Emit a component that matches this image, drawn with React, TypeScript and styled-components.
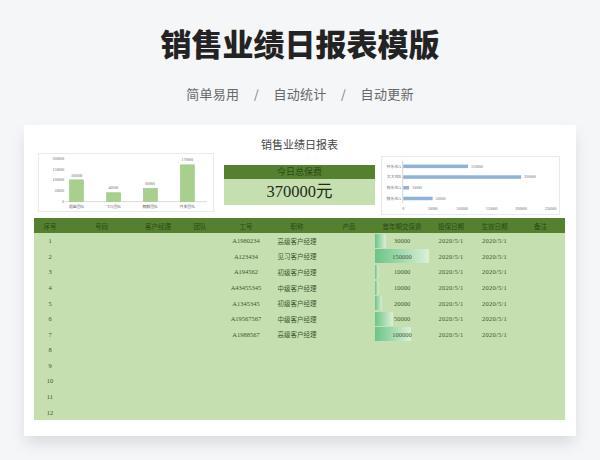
import styled, { createGlobalStyle } from "styled-components"

const GlobalStyle = createGlobalStyle`
  html, body {
    margin: 0;
    padding: 0;
    background: #f5f6f8;
  }
`

const Page = styled.div`
  width: 600px;
  height: 460px;
  overflow: hidden;
  background: #f5f6f8;
  padding-top: 23px;
  box-sizing: border-box;
  font-family: "Noto Sans CJK SC", "Noto Sans", sans-serif;
`

const Heading = styled.h1`
  margin: 0;
  height: 40px;
  line-height: 40px;
  text-align: center;
  font-size: 31px;
  font-weight: 900;
  color: #232323;
`

const Features = styled.div`
  margin-top: 20px;
  height: 20px;
  display: flex;
  justify-content: center;
  align-items: center;
  gap: 13px;
  font-size: 13px;
  letter-spacing: 0.3px;
  color: #666;
`

const Slash = styled.span`
  width: 8px;
  text-align: center;
  font-size: 12px;
  color: #777;
`

const Sheet = styled.div`
  width: 552px;
  height: 311px;
  margin: 22px 0 0 24px;
  padding: 0 11px 0 10px;
  box-sizing: border-box;
  background: #fff;
  box-shadow: 0 8px 14px -2px rgba(70, 80, 100, 0.18);
  font-family: "Liberation Serif", "Noto Sans CJK SC", serif;
`

const SheetTitle = styled.div`
  height: 28px;
  padding-top: 8px;
  box-sizing: border-box;
  line-height: 24px;
  text-align: center;
  font-size: 11px;
  color: #444;
`

const Summary = styled.div`
  height: 65px;
  padding-left: 4px;
  display: flex;
  align-items: flex-start;
`

const ChartBox = styled.div<{ $width: number; $top: number; $gap: number }>`
  width: ${p => p.$width}px;
  height: 59px;
  margin: ${p => p.$top}px ${p => p.$gap}px 0 0;
  border: 1px solid #e9ebe8;
  box-sizing: border-box;
  flex: none;
  svg {
    display: block;
    width: 100%;
    height: 100%;
  }
  text {
    font-family: "Liberation Serif", "Noto Sans CJK SC", serif;
    font-size: 4px;
    fill: #6b6b6b;
  }
`

const Total = styled.div`
  width: 151px;
  height: 40px;
  margin: 12px 6px 0 0;
  flex: none;
  background: #c5dfb1;
  text-align: center;
`

const TotalLabel = styled.div`
  height: 14px;
  line-height: 14px;
  background: #55802f;
  font-size: 9px;
  color: #2c4a18;
`

const TotalValue = styled.div`
  height: 26px;
  line-height: 26px;
  font-size: 16.5px;
  color: #1f2a18;
`

const columns = "32px 71px 42px 42px 50px 52px 52px 54px 44px 43px 49px"

const Table = styled.div`
  width: 531px;
  background: #c5dfb1;
  font-size: 6.5px;
  color: #3c5a2e;
`

const HeadRow = styled.div`
  height: 15px;
  display: grid;
  grid-template-columns: ${columns};
  align-items: center;
  background: #55802f;
  color: #2c4a18;
`

const Row = styled.div`
  height: 15.58px;
  display: grid;
  grid-template-columns: ${columns};
  align-items: stretch;
`

const Cell = styled.div`
  display: flex;
  align-items: center;
  justify-content: center;
  white-space: nowrap;
`

const DateCell = styled(Cell)`
  letter-spacing: 0.25px;
`

const BarCell = styled(Cell)<{ $pct: number }>`
  background-image: linear-gradient(90deg, #6cc488, #dcefd8);
  background-repeat: no-repeat;
  background-position: left center;
  background-size: ${p => p.$pct}% 14px;
`

const heads = ["序号", "号码", "客户经理", "团队", "工号", "职称", "产品", "首年期交保费", "投保日期", "生效日期", "备注"]

const people = [
  { id: "A1980234", title: "高级客户经理", fee: 30000 },
  { id: "A123434", title: "见习客户经理", fee: 150000 },
  { id: "A194562", title: "初级客户经理", fee: 10000 },
  { id: "A43455345", title: "中级客户经理", fee: 10000 },
  { id: "A1345345", title: "初级客户经理", fee: 20000 },
  { id: "A19567567", title: "中级客户经理", fee: 50000 },
  { id: "A1988567", title: "高级客户经理", fee: 100000 },
]

const teams = [
  { name: "超越团队", value: 100000, x: 29.5, tx: 37 },
  { name: "飞马团队", value: 40000, x: 68, tx: 75 },
  { name: "麒麟团队", value: 60000, x: 106, tx: 113 },
  { name: "月季团队", value: 170000, x: 144.3, tx: 151.5 },
]

const TeamChart = () => (
  <ChartBox $width={176} $top={0} $gap={10}>
    <svg viewBox="0 0 176 59">
      {[200000, 150000, 100000, 50000, 0].map((v, i) => (
        <text key={v} x="24" y={6 + i * 11.1} textAnchor="end">{v}</text>
      ))}
      <line x1="25" y1="49.3" x2="172" y2="49.3" stroke="#d9d9d9" strokeWidth="1" />
      {teams.map(t => {
        const h = (t.value / 200000) * 44.4
        return (
          <g key={t.name}>
            <rect x={t.x} y={49 - h} width="14.4" height={h} fill="#a9cf8e" stroke="#93c479" strokeWidth="0.6" />
            <text x={t.tx} y={49 - h - 3.5} textAnchor="middle">{t.value}</text>
            <text x={t.tx} y="56" textAnchor="middle">{t.name}</text>
          </g>
        )
      })}
    </svg>
  </ChartBox>
)

const products = [
  { name: "开乐花A", value: 110000 },
  { name: "大大花B", value: 200000 },
  { name: "悦乐花A", value: 10000 },
  { name: "快乐花A", value: 50000 },
]

const ProductChart = () => (
  <ChartBox $width={179} $top={3} $gap={0}>
    <svg viewBox="0 0 179 58">
      <line x1="20.5" y1="4" x2="20.5" y2="47" stroke="#b9b9b9" strokeWidth="0.6" />
      {products.map((p, i) => {
        const y = 9.5 + i * 10.9
        const w = p.value * 0.0006
        return (
          <g key={p.name}>
            <text x="19" y={y + 1.4} textAnchor="end">{p.name}</text>
            <rect x="21" y={y - 1.8} width={w} height="3.6" fill="#8db4d6" />
            <text x={21 + w + 3} y={y + 1.4}>{p.value}</text>
          </g>
        )
      })}
      {[0, 50000, 100000, 150000, 200000, 250000].map((v, i) => (
        <text key={v} x={21 + i * 30} y="54" textAnchor="middle">{v}</text>
      ))}
    </svg>
  </ChartBox>
)

const App = () => {
  const rows = Array.from({ length: 12 }, (_, i) => i)

  return (
    <Page>
      <GlobalStyle />
      <Heading>销售业绩日报表模版</Heading>
      <Features>
        <span>简单易用</span>
        <Slash>/</Slash>
        <span>自动统计</span>
        <Slash>/</Slash>
        <span>自动更新</span>
      </Features>
      <Sheet>
        <SheetTitle>销售业绩日报表</SheetTitle>
        <Summary>
          <TeamChart />
          <Total>
            <TotalLabel>今日总保费</TotalLabel>
            <TotalValue>370000元</TotalValue>
          </Total>
          <ProductChart />
        </Summary>
        <Table>
          <HeadRow>
            {heads.map(h => <Cell key={h}>{h}</Cell>)}
          </HeadRow>
          {rows.map(i => {
            const p = people[i]
            return (
              <Row key={i}>
                <Cell>{i + 1}</Cell>
                <Cell />
                <Cell />
                <Cell />
                <Cell>{p?.id}</Cell>
                <Cell>{p?.title}</Cell>
                <Cell />
                {p ? <BarCell $pct={(p.fee / 150000) * 100}>{p.fee}</BarCell> : <Cell />}
                <DateCell>{p && "2020/5/1"}</DateCell>
                <DateCell>{p && "2020/5/1"}</DateCell>
                <Cell />
              </Row>
            )
          })}
        </Table>
      </Sheet>
    </Page>
  )
}

export default App
